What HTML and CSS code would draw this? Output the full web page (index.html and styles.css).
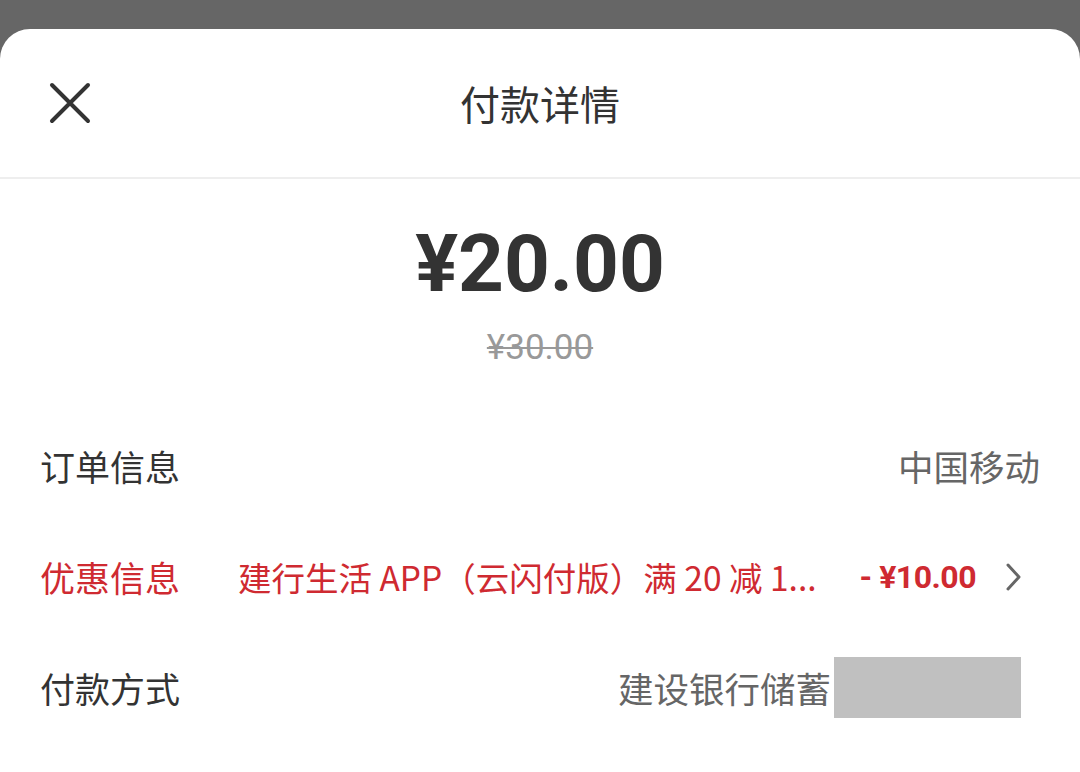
FILE: index.html
```html
<!DOCTYPE html>
<html lang="zh-CN">
<head>
    <meta charset="UTF-8">
    <meta name="viewport" content="width=device-width, initial-scale=1.0">
    <title>付款详情</title>
    <link rel="stylesheet" href="styles.css">
</head>
<body>
    <div class="sheet">
        <div class="header">
            <div class="close">
                <svg width="42" height="42" viewBox="0 0 42 42">
                    <path d="M3 3 L39 39 M39 3 L3 39" stroke="#333" stroke-width="4" stroke-linecap="round" fill="none"/>
                </svg>
            </div>
            <div class="title">付款详情</div>
            <div></div>
        </div>

        <div class="amount-box">
            <div class="amount">¥20.00</div>
            <div class="origin">¥30.00</div>
        </div>

        <div class="row">
            <div class="label">订单信息</div>
            <div class="value">中国移动</div>
        </div>

        <div class="row discount">
            <div class="label">优惠信息</div>
            <div class="desc">建行生活 APP（云闪付版）满 20 减 1...</div>
            <div class="minus">- ¥10.00</div>
            <div class="arrow">
                <svg width="20" height="32" viewBox="0 0 20 32">
                    <path d="M4 4 L15 16 L4 28" stroke="#666" stroke-width="3" stroke-linecap="round" stroke-linejoin="round" fill="none"/>
                </svg>
            </div>
        </div>

        <div class="row">
            <div class="label">付款方式</div>
            <div class="value">建设银行储蓄<span class="mask"></span></div>
        </div>
    </div>
</body>
</html>
```

FILE: styles.css
```css
body {
    margin: 0;
    background-color: #666;
    font-family: "Noto Sans CJK SC", "Noto Sans", sans-serif;
    overflow: hidden;
}

.sheet {
    margin-top: 29px;
    background-color: #fff;
    border-radius: 30px 30px 0 0;
    height: 743px;
}

.header {
    height: 148px;
    display: grid;
    grid-template-columns: 1fr auto 1fr;
    align-items: center;
    padding: 0 49px;
    border-bottom: 2px solid #eee;
}

.close {
    display: flex;
    align-items: center;
}

.title {
    font-size: 40px;
    color: #333;
}

.amount-box {
    text-align: center;
    padding-top: 42px;
    height: 231px;
    box-sizing: border-box;
}

.amount {
    font-family: Roboto, "Noto Sans CJK SC", sans-serif;
    font-weight: bold;
    font-size: 80px;
    line-height: 86px;
    color: #333;
}

.origin {
    font-family: Roboto, "Noto Sans CJK SC", sans-serif;
    font-size: 35px;
    line-height: 40px;
    margin-top: 21px;
    color: #999;
    text-decoration: line-through;
    text-decoration-thickness: 2px;
}

.row {
    height: 111px;
    display: flex;
    align-items: center;
    padding: 0 40px;
    font-size: 35px;
}

.label {
    color: #333;
    width: 198px;
    flex-shrink: 0;
}

.value {
    margin-left: auto;
    color: #666;
    font-size: 35.5px;
    display: flex;
    align-items: center;
}

.discount .label,
.discount .desc,
.discount .minus {
    color: #cf2a31;
}

.desc {
    font-size: 33.5px;
    white-space: nowrap;
}

.minus {
    font-family: Roboto, "Noto Sans CJK SC", sans-serif;
    font-weight: bold;
    font-size: 32px;
    letter-spacing: -0.5px;
    margin-left: auto;
}

.arrow {
    margin-left: 28px;
    margin-right: 16px;
    display: flex;
}

.mask {
    display: inline-block;
    width: 187px;
    height: 61px;
    margin-left: 3px;
    margin-right: 19px;
    background-color: #c0c0c0;
}
```
